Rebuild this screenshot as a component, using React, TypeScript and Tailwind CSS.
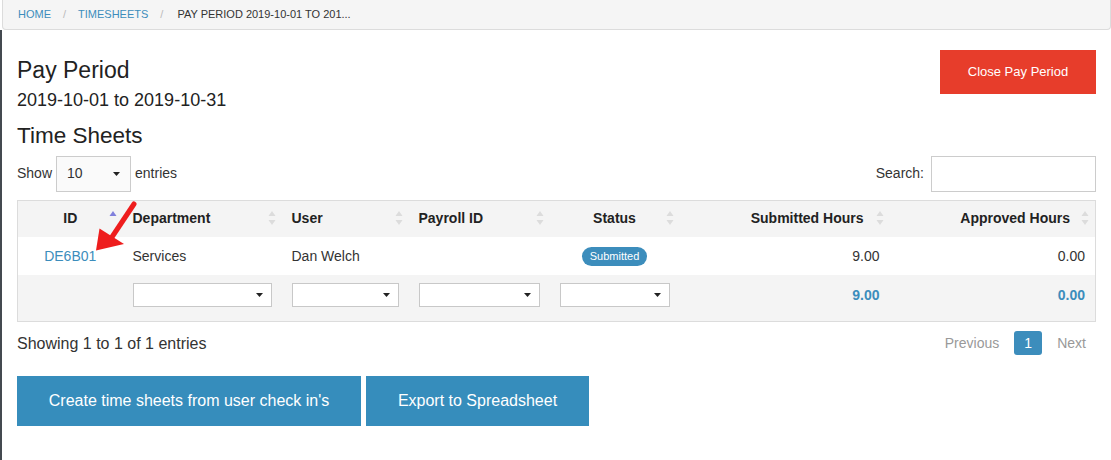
import React from "react";

function Caret() {
  return (
    <svg width="7" height="4" viewBox="0 0 7 4" className="shrink-0">
      <path d="M0 0H7L3.5 4Z" fill="#222" />
    </svg>
  );
}

function SortIcon({ active }: { active?: boolean }) {
  return (
    <svg width="8" height="15" viewBox="0 0 8 15" className="shrink-0">
      <path d="M4 0L7.5 5H0.5Z" fill={active ? "#8080dc" : "#dcdcdc"} />
      {!active && <path d="M0.5 9H7.5L4 14Z" fill="#dcdcdc" />}
    </svg>
  );
}

function FooterSelect() {
  return (
    <div className="h-[24px] border border-[#c8c8c8] bg-white flex items-center justify-end pr-[8px]">
      <Caret />
    </div>
  );
}

export default function App() {
  return (
    <div className="relative w-[1111px] h-[460px] overflow-hidden bg-white text-[#333] font-['Liberation_Sans',Arial,sans-serif] text-[14px] flex flex-col">
      {/* breadcrumb */}
      <div className="ml-[2px] h-[30px] shrink-0 border border-t-0 border-[#dcdcdc] rounded-b-[4px] bg-[#f5f5f5] flex items-center pl-[15px] gap-[12px] text-[11px] uppercase">
        <span className="text-[#3c8dbc]">Home</span>
        <span className="text-[#bbb]">/</span>
        <span className="text-[#3c8dbc]">Timesheets</span>
        <span className="text-[#bbb]">/</span>
        <span className="text-[#333] ml-[2px]">Pay Period 2019-10-01 to 201...</span>
      </div>

      {/* main */}
      <div className="flex-1 border-l-2 border-[#444a50] pl-[15px] pr-[15px] pt-[20px]">
        <div className="flex justify-between items-start">
          <div className="pt-[8px]">
            <div className="text-[23px] leading-[25px] text-[#222]">Pay Period</div>
            <div className="mt-[7px] text-[18px] leading-[20px] text-[#222]">2019-10-01 to 2019-10-31</div>
          </div>
          <button className="w-[156px] h-[44px] bg-[#e73d2b] text-white text-[13px]">Close Pay Period</button>
        </div>
        <div className="mt-[13px] text-[22.5px] leading-[25px] text-[#222]">Time Sheets</div>

        <div className="mt-[7px] flex justify-between items-center h-[36px]">
          <div className="flex items-center gap-[4px] pt-[1px]">
            <span>Show</span>
            <div className="w-[75px] h-[36px] border border-[#ccc] bg-[#fafafa] flex items-center justify-between pl-[10px] pr-[10px]">
              <span>10</span>
              <Caret />
            </div>
            <span>entries</span>
          </div>
          <div className="flex items-center gap-[7px] pt-[1px]">
            <span>Search:</span>
            <div className="w-[165px] h-[36px] border border-[#ccc] bg-white" />
          </div>
        </div>

        <table className="mt-[9px] w-[1078px] table-fixed border-collapse border border-[#dcdcdc]">
          <colgroup>
            <col className="w-[105px]" />
            <col className="w-[159px]" />
            <col className="w-[127px]" />
            <col className="w-[141px]" />
            <col className="w-[130px]" />
            <col className="w-[210px]" />
            <col className="w-[206px]" />
          </colgroup>
          <thead>
            <tr className="h-[36px] bg-[#f4f4f4] font-bold text-[#222]">
              <th className="p-0 pr-[6px]">
                <div className="flex items-center">
                  <span className="w-[8px]" />
                  <span className="flex-1 text-center pl-[6px]">ID</span>
                  <SortIcon active />
                </div>
              </th>
              <th className="p-0 pl-[10px] pr-[6px]">
                <div className="flex items-center justify-between">
                  <span>Department</span>
                  <SortIcon />
                </div>
              </th>
              <th className="p-0 pl-[10px] pr-[6px]">
                <div className="flex items-center justify-between">
                  <span>User</span>
                  <SortIcon />
                </div>
              </th>
              <th className="p-0 pl-[10px] pr-[6px]">
                <div className="flex items-center justify-between">
                  <span>Payroll ID</span>
                  <SortIcon />
                </div>
              </th>
              <th className="p-0 pl-[6px] pr-[6px]">
                <div className="flex items-center">
                  <span className="w-[8px]" />
                  <span className="flex-1 text-center">Status</span>
                  <SortIcon />
                </div>
              </th>
              <th className="p-0 pr-[6px]">
                <div className="flex items-center justify-end gap-[12px]">
                  <span>Submitted Hours</span>
                  <SortIcon />
                </div>
              </th>
              <th className="p-0 pr-[6px]">
                <div className="flex items-center justify-end gap-[11px]">
                  <span>Approved Hours</span>
                  <SortIcon />
                </div>
              </th>
            </tr>
          </thead>
          <tbody>
            <tr className="h-[38px] bg-white">
              <td className="text-center text-[#3c8dbc] pt-[1px]">DE6B01</td>
              <td className="pl-[10px] pt-[1px]">Services</td>
              <td className="pl-[10px] pt-[1px]">Dan Welch</td>
              <td className="pl-[10px]"></td>
              <td className="text-center">
                <span className="inline-flex items-center h-[19px] px-[8px] rounded-full bg-[#3c8dbc] text-white text-[11px]">Submitted</span>
              </td>
              <td className="text-right pr-[10px] pt-[1px]">9.00</td>
              <td className="text-right pr-[10px] pt-[1px]">0.00</td>
            </tr>
          </tbody>
          <tfoot>
            <tr className="h-[47px] bg-[#f4f4f4] align-top">
              <td></td>
              <td className="px-[10px] pt-[8px]"><FooterSelect /></td>
              <td className="px-[10px] pt-[8px]"><FooterSelect /></td>
              <td className="px-[10px] pt-[8px]"><FooterSelect /></td>
              <td className="px-[10px] pt-[8px]"><FooterSelect /></td>
              <td className="text-right pr-[10px] pt-[10px] leading-[20px] font-bold text-[#3c8dbc]">9.00</td>
              <td className="text-right pr-[10px] pt-[10px] leading-[20px] font-bold text-[#3c8dbc]">0.00</td>
            </tr>
          </tfoot>
        </table>

        <div className="mt-[9px] w-[1078px] h-[24px] flex justify-between items-center">
          <span className="text-[16px] pt-[2px]">Showing 1 to 1 of 1 entries</span>
          <div className="flex items-center gap-[15px] pr-[9px] text-[#999]">
            <span>Previous</span>
            <span className="w-[28px] h-[24px] rounded-[3px] bg-[#3c8dbc] text-white flex items-center justify-center">1</span>
            <span>Next</span>
          </div>
        </div>

        <div className="mt-[21px] flex gap-[5px]">
          <button className="w-[344px] h-[50px] bg-[#368dbc] text-white text-[16px]">Create time sheets from user check in's</button>
          <button className="w-[223px] h-[50px] bg-[#368dbc] text-white text-[16px]">Export to Spreadsheet</button>
        </div>
      </div>

      {/* red annotation arrow */}
      <svg className="absolute left-0 top-0 pointer-events-none" width="1111" height="460" viewBox="0 0 1111 460">
        <line x1="134" y1="204" x2="112" y2="237" stroke="#ee1d1d" strokeWidth="5" strokeLinecap="round" />
        <path d="M99.5 228.5L124 244L96 250.5Z" fill="#ee1d1d" />
      </svg>
    </div>
  );
}
